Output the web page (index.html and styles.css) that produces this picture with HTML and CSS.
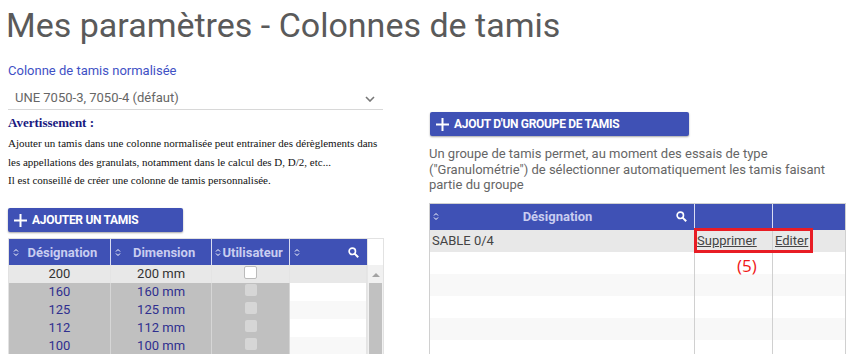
FILE: index.html
```html
<!DOCTYPE html>
<html lang="fr">
<head>
<meta charset="utf-8">
<title>Mes paramètres - Colonnes de tamis</title>
<link rel="stylesheet" href="styles.css">
</head>
<body>
<h1 class="title">Mes paramètres - Colonnes de tamis</h1>
<div class="columns">
  <div class="left">
    <div class="field-label">Colonne de tamis normalisée</div>
    <div class="select">
      <span>UNE 7050-3, 7050-4 (défaut)</span>
      <svg class="chev" width="10" height="6" viewBox="0 0 10 6"><path d="M1 1l4 4 4-4" fill="none" stroke="#777" stroke-width="1.6"/></svg>
    </div>
    <div class="warn-title">Avertissement :</div>
    <p class="warn">Ajouter un tamis dans une colonne normalisée peut entrainer des dérèglements dans<br>les appellations des granulats, notamment dans le calcul des D, D/2, etc...<br>Il est conseillé de créer une colonne de tamis personnalisée.</p>
    <button class="btn"><svg width="13" height="13" viewBox="0 0 13 13"><path d="M6.5 0v13M0 6.5h13" stroke="#fff" stroke-width="2"/></svg>AJOUTER UN TAMIS</button>
    <div class="ltable">
      <div class="lmain">
        <div class="lrow lhead">
          <div class="hc c1"><svg class="sort" width="6" height="9" viewBox="0 0 6 9"><path d="M1 3.5l2-2 2 2M1 5.5l2 2 2-2" fill="none" stroke="#fff" stroke-width="1"/></svg><span>Désignation</span></div>
          <div class="hc c2"><svg class="sort" width="6" height="9" viewBox="0 0 6 9"><path d="M1 3.5l2-2 2 2M1 5.5l2 2 2-2" fill="none" stroke="#fff" stroke-width="1"/></svg><span>Dimension</span></div>
          <div class="hc c3 tight"><svg class="sort" width="6" height="9" viewBox="0 0 6 9"><path d="M1 3.5l2-2 2 2M1 5.5l2 2 2-2" fill="none" stroke="#fff" stroke-width="1"/></svg><span>Utilisateur</span></div>
          <div class="hc c4"><svg class="sort" width="6" height="9" viewBox="0 0 6 9"><path d="M1 3.5l2-2 2 2M1 5.5l2 2 2-2" fill="none" stroke="#fff" stroke-width="1"/></svg><span></span><svg class="search" width="11" height="11" viewBox="0 0 11 11"><circle cx="4.3" cy="4.3" r="3.2" fill="none" stroke="#fff" stroke-width="1.6"/><path d="M6.6 6.6l3.6 3.6" stroke="#fff" stroke-width="2"/></svg></div>
        </div>
        <div class="lrow first">
          <div class="c c1">200</div><div class="c c2">200 mm</div><div class="c c3"><span class="cb"></span></div><div class="c c4"></div>
        </div>
        <div class="lrow sel">
          <div class="c c1">160</div><div class="c c2">160 mm</div><div class="c c3"><span class="cb"></span></div><div class="c c4"></div>
        </div>
        <div class="lrow sel alt">
          <div class="c c1">125</div><div class="c c2">125 mm</div><div class="c c3"><span class="cb"></span></div><div class="c c4"></div>
        </div>
        <div class="lrow sel">
          <div class="c c1">112</div><div class="c c2">112 mm</div><div class="c c3"><span class="cb"></span></div><div class="c c4"></div>
        </div>
        <div class="lrow sel alt">
          <div class="c c1">100</div><div class="c c2">100 mm</div><div class="c c3"><span class="cb"></span></div><div class="c c4"></div>
        </div>
      </div>
      <div class="scroll">
        <div class="scroll-head"></div>
        <div class="scroll-track">
          <div class="scroll-up"></div>
          <div class="scroll-thumb"></div>
        </div>
      </div>
    </div>
  </div>
  <div class="right">
    <button class="btn btn-group"><svg width="13" height="13" viewBox="0 0 13 13"><path d="M6.5 0v13M0 6.5h13" stroke="#fff" stroke-width="2"/></svg>AJOUT D'UN GROUPE DE TAMIS</button>
    <p class="info">Un groupe de tamis permet, au moment des essais de type<br>("Granulométrie") de sélectionner automatiquement les tamis faisant<br>partie du groupe</p>
    <div class="rtable">
      <div class="rrow rhead">
        <div class="hc r1"><svg class="sort" width="6" height="9" viewBox="0 0 6 9"><path d="M1 3.5l2-2 2 2M1 5.5l2 2 2-2" fill="none" stroke="#fff" stroke-width="1"/></svg><span>Désignation</span><svg class="search" width="11" height="11" viewBox="0 0 11 11"><circle cx="4.3" cy="4.3" r="3.2" fill="none" stroke="#fff" stroke-width="1.6"/><path d="M6.6 6.6l3.6 3.6" stroke="#fff" stroke-width="2"/></svg></div>
        <div class="hc r2"></div>
        <div class="hc r3"></div>
      </div>
      <div class="rrow rfirst">
        <div class="rc r1">SABLE 0/4</div>
        <div class="rc r2"><a href="#">Supprimer</a></div>
        <div class="rc r3"><a href="#">Editer</a></div>
      </div>
      <div class="rrow"><div class="rc r1"></div><div class="rc r2"></div><div class="rc r3"></div></div>
      <div class="rrow alt"><div class="rc r1"></div><div class="rc r2"></div><div class="rc r3"></div></div>
      <div class="rrow"><div class="rc r1"></div><div class="rc r2"></div><div class="rc r3"></div></div>
      <div class="rrow alt"><div class="rc r1"></div><div class="rc r2"></div><div class="rc r3"></div></div>
      <div class="rrow"><div class="rc r1"></div><div class="rc r2"></div><div class="rc r3"></div></div>
      <div class="highlight"></div>
      <div class="annot">(5)</div>
    </div>
  </div>
</div>
</body>
</html>
```

FILE: styles.css
```css
html, body {
  margin: 0;
  padding: 0;
  background: #fff;
  overflow: hidden;
}
body {
  font-family: Roboto, "Liberation Sans", sans-serif;
  color: #555;
  width: 857px;
  height: 354px;
}
.title {
  margin: 0;
  padding: 5px 0 0 6px;
  font-weight: 400;
  font-size: 34px;
  line-height: 40px;
  color: #5a5a5a;
  letter-spacing: 0;
}
.columns {
  display: flex;
  gap: 44px;
  padding-left: 8px;
}
.left {
  width: 377px;
  display: flex;
  flex-direction: column;
}
.field-label {
  margin-top: 18px;
  font-size: 13px;
  line-height: 16px;
  color: #3f51c5;
}
.select {
  margin-top: 8px;
  height: 22px;
  border-bottom: 1px solid #d8d8d8;
  display: flex;
  align-items: center;
  justify-content: space-between;
  padding: 0 8px 0 7px;
  font-size: 13px;
  color: #666;
  width: 360px;
}
.select span { line-height: 18px; }
.chev { margin-top: 1px; }
.warn-title {
  margin-top: 5px;
  font-family: "Liberation Serif", serif;
  font-weight: 700;
  font-size: 13px;
  line-height: 16px;
  color: #1a1a80;
}
.warn {
  margin: 3px 0 0;
  font-family: "Liberation Serif", serif;
  font-size: 11px;
  line-height: 18.7px;
  color: #111;
}
.btn {
  display: flex;
  align-items: center;
  gap: 5px;
  border: 0;
  border-radius: 2px;
  background: #3f51b5;
  color: #fff;
  font-family: Roboto, "Liberation Sans", sans-serif;
  font-weight: 700;
  font-size: 12px;
  letter-spacing: -0.3px;
  height: 24px;
  padding: 0 0 0 6px;
  box-shadow: 0 1px 2px rgba(0,0,0,0.35);
  cursor: pointer;
}
.left .btn {
  margin-top: 18px;
  width: 175px;
}
.ltable {
  margin-top: 6px;
  display: flex;
  border: 1px solid #e2e2e2;
  border-left: 1px solid #e2e2e2;
  width: 376px;
  height: 130px;
  box-sizing: border-box;
}
.lmain {
  width: 358px;
  display: flex;
  flex-direction: column;
}
.lrow {
  display: flex;
  height: 18px;
}
.lhead {
  height: 26px;
  background: #3f51b5;
}
.hc {
  display: flex;
  align-items: center;
  color: #c9cdf0;
  font-weight: 700;
  font-size: 13px;
  box-sizing: border-box;
  border-right: 1px solid #d9dcf2;
  padding: 0 4px;
}
.hc span {
  flex: 1;
  text-align: center;
}
.hc.tight { padding: 0 0 0 3px; }
.hc.tight span { text-align: left; padding-left: 1px; }
.hc .search { margin-right: 3px; }
.c1 { width: 102px; }
.c2 { width: 102px; }
.c3 { width: 78px; }
.c4 { width: 77px; }
.lhead .c4 { border-right: 1px solid #3f51b5; }
.c {
  box-sizing: border-box;
  font-size: 13px;
  line-height: 18px;
  text-align: center;
  border-right: 1px solid #e4e4e4;
  display: flex;
  align-items: center;
  justify-content: center;
}
.first .c {
  background: #e8e8e8;
  color: #333;
}
.sel .c1, .sel .c2, .sel .c3 {
  background: #c0c0c0;
  color: #2f2f8f;
  border-right-color: #d6d6d6;
}
.sel .c4 { background: #fff; }
.sel.alt .c4 { background: #f8f8f8; }
.cb {
  display: block;
  width: 11px;
  height: 11px;
  border-radius: 2px;
  background: #fff;
  border: 1px solid #bbb;
  margin-top: -4px;
}
.sel .cb {
  border: 0;
  background: #d6d6d6;
  width: 12px;
  height: 12px;
}
.scroll {
  flex: 1;
  display: flex;
  flex-direction: column;
  border-left: 1px solid #e6e6e6;
}
.scroll-head { height: 26px; background: #fff; }
.scroll-track {
  flex: 1;
  background: #f1f1f1;
  display: flex;
  flex-direction: column;
  align-items: center;
}
.scroll-up {
  width: 0;
  height: 0;
  box-sizing: border-box;
  border-left: 4px solid transparent;
  border-right: 4px solid transparent;
  border-bottom: 4px solid #a3a3a3;
  margin: 8px 0 6px;
}
.scroll-thumb {
  width: 13px;
  flex: 1;
  background: #c1c1c1;
}
.right {
  width: 417px;
  display: flex;
  flex-direction: column;
  padding-top: 67px;
}
.btn-group {
  width: 259px;
  margin-left: 1px;
}
.info {
  margin: 10px 0 0 0;
  font-size: 13px;
  line-height: 15.5px;
  color: #666;
}
.rtable {
  position: relative;
  margin-top: 10px;
  border: 1px solid #d0d0d0;
  border-bottom: 0;
  width: 417px;
  box-sizing: border-box;
}
.rrow {
  display: flex;
  height: 22px;
  background: #fff;
}
.rrow.alt { background: #f8f8f8; }
.rhead {
  height: 26px;
  background: #3f51b5;
}
.rfirst { background: #e8e8e8; }
.r1 { width: 265px; }
.r2 { width: 78px; }
.r3 { width: 72px; }
.rhead .hc { border-right: 1px solid #d9dcf2; }
.rhead .r3 { border-right: 0; }
.rhead .r1 { padding-left: 3px; }
.rc {
  box-sizing: border-box;
  border-right: 1px solid #d0d0d0;
  font-size: 13px;
  line-height: 22px;
  color: #444;
  padding-left: 2px;
}
.rc.r3 { border-right: 0; }
.rc a { color: #444; text-decoration: underline; }
.highlight {
  position: absolute;
  left: 264px;
  top: 24px;
  width: 119px;
  height: 25px;
  box-sizing: border-box;
  border: 3px solid #e81c24;
}
.annot {
  position: absolute;
  left: 307px;
  top: 51px;
  font-family: "Open Sans", sans-serif;
  font-size: 17px;
  line-height: 22px;
  color: #f01818;
}
```
